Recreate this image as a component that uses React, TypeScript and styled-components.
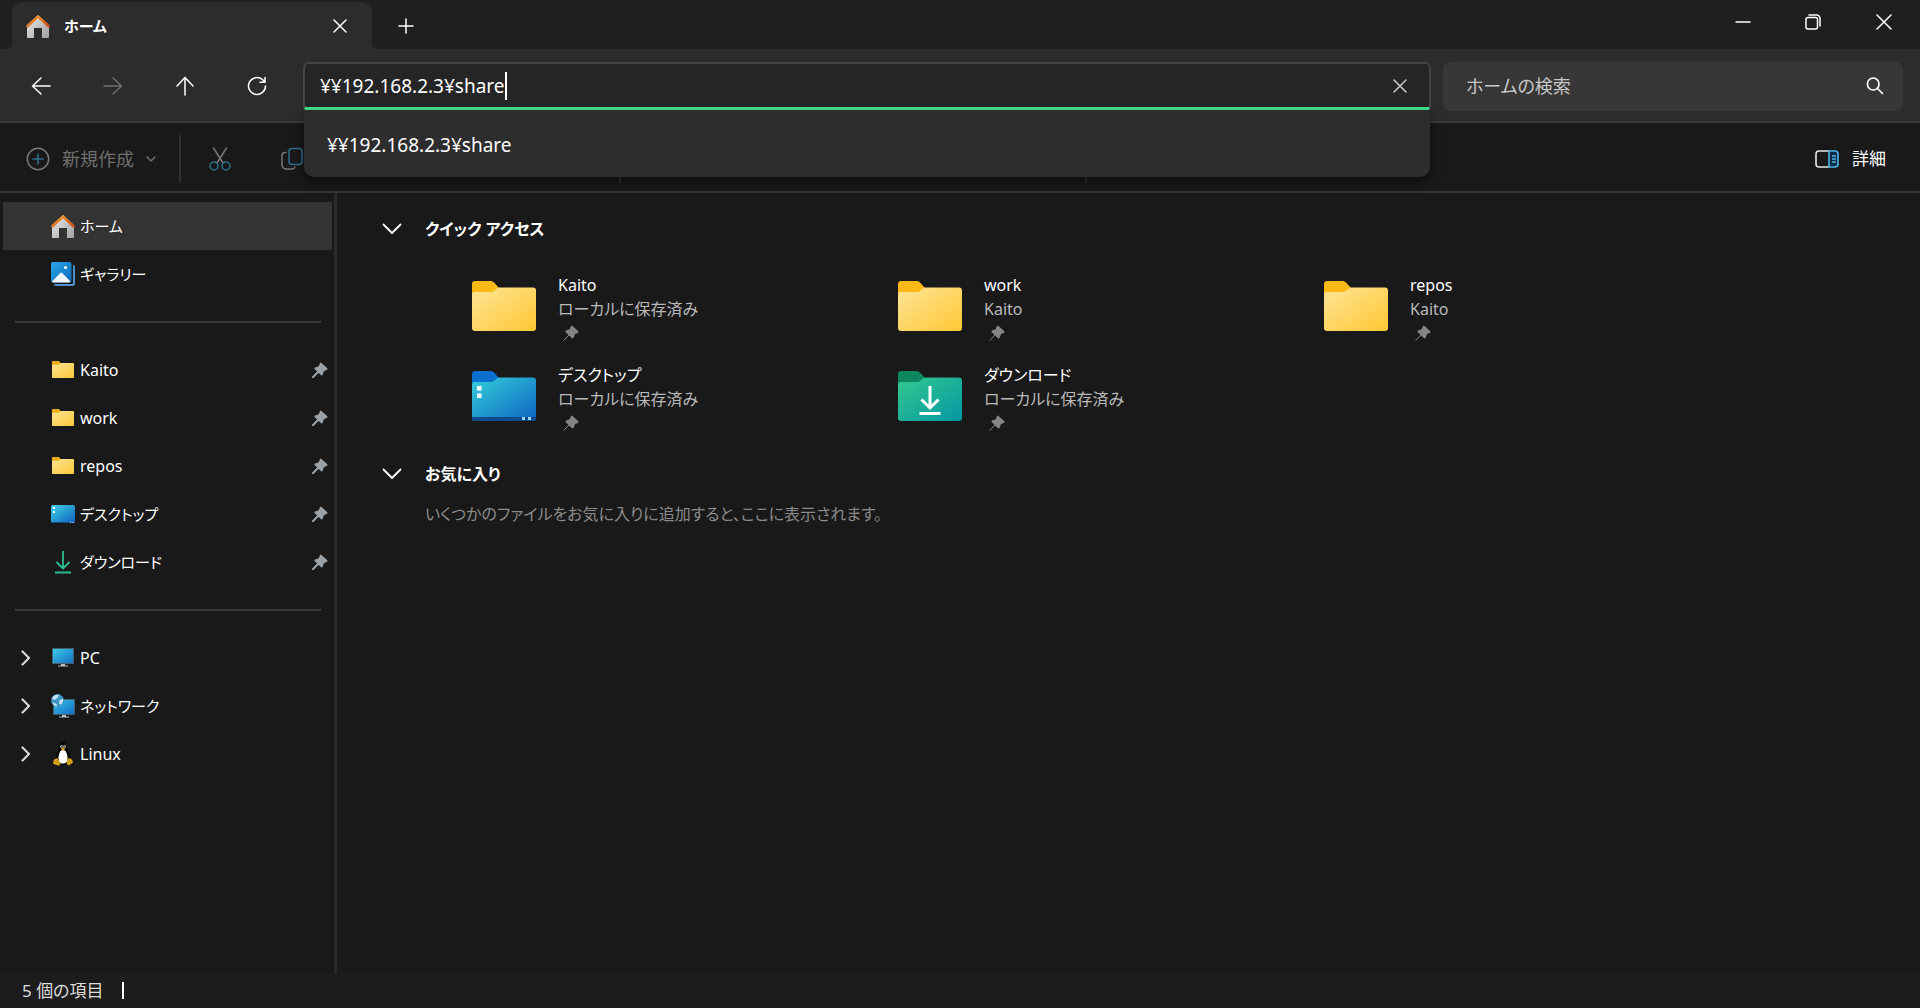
import React, { useState } from "react";
import styled, { createGlobalStyle, css } from "styled-components";

const GlobalStyle = createGlobalStyle`
  *, *::before, *::after { box-sizing: border-box; }
  body {
    margin: 0;
    background: #191919;
    color: #ffffff;
    font-family: "Noto Sans", "Noto Sans CJK JP", sans-serif;
    font-feature-settings: "palt";
    font-size: 16px;
    line-height: 24px;
  }
  button, input {
    font: inherit;
    font-feature-settings: inherit;
    color: inherit;
    background: none;
    border: 0;
    padding: 0;
    margin: 0;
    outline: none;
  }
  svg { display: block; flex: none; }
  h2, p, ul { margin: 0; padding: 0; }
  ul { list-style: none; }
`;

const Window = styled.div`
  display: flex;
  flex-direction: column;
  min-height: 100vh;
`;

const TitleBar = styled.header`
  display: flex;
  align-items: stretch;
  height: 49px;
  padding: 2px 0 0 12px;
  background: #1f1f1f;
`;

const Tab = styled.div`
  position: relative;
  display: flex;
  align-items: center;
  width: 360px;
  padding: 0 16px 0 14px;
  background: #2c2c2c;
  border-radius: 10px 10px 0 0;

  &::before,
  &::after {
    content: "";
    position: absolute;
    bottom: 0;
    width: 6px;
    height: 6px;
  }
  &::before {
    left: -6px;
    background: radial-gradient(circle at 0 0, transparent 6px, #2c2c2c 6px);
  }
  &::after {
    right: -6px;
    background: radial-gradient(circle at 100% 0, transparent 6px, #2c2c2c 6px);
  }
`;

const TabTitle = styled.span`
  flex: 1;
  margin-left: 14px;
  font-size: 15px;
  font-weight: 600;
`;

const IconButton = styled.button<{ $w: number; $h: number; $dim?: boolean }>`
  display: flex;
  align-items: center;
  justify-content: center;
  flex: none;
  width: ${(p) => p.$w}px;
  height: ${(p) => p.$h}px;
  color: ${(p) => (p.$dim ? "#6f6f6f" : "#ffffff")};
`;

const WindowButtons = styled.div`
  display: flex;
  margin-left: auto;
`;

const NavBar = styled.div`
  display: grid;
  grid-template-columns: 298px minmax(0, 1140fr) minmax(0, 460fr);
  align-items: center;
  height: 74px;
  padding: 2px 17px 0 5px;
  background: #2c2c2c;
  border-bottom: 2px solid #3c3c3c;
`;

const NavButtons = styled.div`
  display: flex;
`;

const AddressArea = styled.div`
  position: relative;
  margin-right: 12px;
`;

const AddressBox = styled.label`
  display: flex;
  align-items: center;
  height: 48px;
  padding: 1px 9px 0 15px;
  background: #252525;
  border: 2px solid #454545;
  border-bottom: 3px solid #41e08b;
  border-radius: 6px 6px 4px 4px;
  font-size: 19px;
`;

const AddressInput = styled.input`
  field-sizing: content;
  caret-color: transparent;
  height: 28px;
`;

const Caret = styled.span`
  width: 2px;
  height: 28px;
  margin-right: auto;
  background: #ffffff;
`;

const ClearTone = styled.span`
  color: #cccccc;
`;

const Suggestions = styled.div`
  position: absolute;
  z-index: 2;
  top: 48px;
  left: 1px;
  right: 1px;
  padding: 11px 0 8px;
  background: #2d2d2d;
  border-radius: 0 0 10px 10px;
  box-shadow: 0 6px 12px rgba(0, 0, 0, 0.45);
`;

const Suggestion = styled.button`
  display: block;
  width: 100%;
  height: 48px;
  padding: 0 23px;
  text-align: left;
  font-size: 19px;
`;

const SearchBox = styled.label`
  display: flex;
  align-items: center;
  height: 49px;
  padding: 0 18px 0 23px;
  background: #373737;
  border-radius: 7px;
`;

const SearchInput = styled.input`
  flex: 1;
  min-width: 0;
  font-size: 18px;
  height: 28px;
  &::placeholder {
    color: #c8c8c8;
    opacity: 1;
  }
`;

const CommandBar = styled.div`
  display: flex;
  align-items: center;
  height: 70px;
  padding: 3px 20px 0 26px;
  border-bottom: 2px solid #363636;
`;

const NewButton = styled.button`
  display: flex;
  align-items: center;
  width: 153px;
  height: 48px;
  color: #6f6f6f;
  font-size: 18px;
  gap: 12px;
`;

const Divider = styled.span`
  width: 2px;
  height: 48px;
  background: #303030;
`;

const CommandGroup = styled.div<{ $w: number }>`
  display: flex;
  width: ${(p) => p.$w}px;
  padding: 0 3px;
`;

const DetailsButton = styled.button`
  display: flex;
  align-items: center;
  gap: 13px;
  margin-left: auto;
  padding: 0 14px;
  height: 48px;
  font-size: 17px;
`;

const Body = styled.div`
  display: flex;
  flex: 1;
`;

const Sidebar = styled.nav`
  width: 337px;
  flex: none;
  padding: 9px 2px 0 3px;
  border-right: 3px solid #2a2a2a;
`;

const SideRow = styled.button<{ $active?: boolean }>`
  display: flex;
  align-items: center;
  width: 100%;
  height: 48px;
  padding: 0 4px 0 18px;
  text-align: left;
  ${(p) =>
    p.$active &&
    css`
      background: #333333;
    `}
`;

const Expander = styled.span`
  display: flex;
  width: 30px;
  color: #d6d6d6;
`;

const SideLabel = styled.span<{ $kana?: boolean }>`
  flex: 1;
  margin-left: 5px;
  font-size: ${(p) => (p.$kana ? 15 : 16)}px;
`;

const SidePin = styled.span`
  color: #9aa2a8;
`;

const SideSeparator = styled.hr`
  height: 2px;
  margin: 23px 11px 23px 12px;
  border: 0;
  background: #3b3b3b;
`;

const Main = styled.main`
  flex: 1;
  padding: 12px 45px;
`;

const SectionHead = styled.button`
  display: flex;
  align-items: center;
  gap: 23px;
  height: 48px;
`;

const SectionTitle = styled.h2`
  font-size: 16px;
  line-height: 24px;
  font-weight: 600;
`;

const Tiles = styled.ul`
  display: grid;
  grid-template-columns: repeat(auto-fill, 426px);
  grid-auto-rows: 90px;
  padding: 17px 0 0 90px;
`;

const Tile = styled.li`
  display: flex;
  gap: 22px;
`;

const TileIcon = styled.span`
  padding-top: 11px;
`;

const TileText = styled.div`
  padding-top: 3px;
`;

const TileMeta = styled.div`
  color: #b9b9b9;
`;

const TilePin = styled.div`
  padding: 4px 0 0 5px;
  color: #858585;
`;

const EmptyText = styled.p`
  margin: 4px 0 0 43px;
  color: #8a8a8a;
`;

const StatusBar = styled.footer`
  display: flex;
  align-items: center;
  gap: 18px;
  height: 35px;
  padding: 0 22px;
  background: #1c1c1c;
  color: #dddddd;
  font-size: 17px;
`;

const StatusMark = styled.span`
  width: 2px;
  height: 17px;
  background: #ffffff;
`;

type StrokeProps = { d: string; w: number; h: number; sw?: number };

const Stroke = ({ d, w, h, sw = 1.5 }: StrokeProps) => (
  <svg width={w} height={h} viewBox={`0 0 ${w} ${h}`} fill="none" stroke="currentColor" strokeWidth={sw} strokeLinecap="round" strokeLinejoin="round">
    <path d={d} />
  </svg>
);

const CloseGlyph = ({ size }: { size: number }) => (
  <Stroke w={size} h={size} d={`M1 1L${size - 1} ${size - 1}M${size - 1} 1L1 ${size - 1}`} />
);

const HomeIcon = () => (
  <svg width="24" height="24" viewBox="0 0 24 24">
    <defs>
      <linearGradient id="homeWall" x1="0" y1="0" x2="1" y2="1">
        <stop offset="0" stopColor="#ececec" />
        <stop offset="1" stopColor="#a0a0a0" />
      </linearGradient>
      <linearGradient id="homeRoof" x1="0" y1="0" x2="1" y2="1">
        <stop offset="0" stopColor="#f5a128" />
        <stop offset="1" stopColor="#cf4b12" />
      </linearGradient>
    </defs>
    <path d="M1 11L12 1l11 10v12a1 1 0 0 1-1 1h-6v-10H8v10H2a1 1 0 0 1-1-1z" fill="url(#homeWall)" />
    <path d="M1.4 12.2L12 2.6l10.600 9.600" fill="none" stroke="url(#homeRoof)" strokeWidth="2.600" strokeLinecap="round" strokeLinejoin="round" />
  </svg>
);

const GalleryIcon = () => (
  <svg width="24" height="24" viewBox="0 0 24 24">
    <defs>
      <linearGradient id="gallerySky" x1="0" y1="0" x2="1" y2="1">
        <stop offset="0" stopColor="#2aa6ea" />
        <stop offset="1" stopColor="#0b67b8" />
      </linearGradient>
    </defs>
    <path d="M22 3c1.200 0 2 .8 2 2v17a2 2 0 0 1-2 2H5c-1.200 0-2-.8-2-2h17.500c1 0 1.500-.5 1.500-1.500z" fill="#4f8fce" />
    <rect width="20.500" height="20.500" rx="2" fill="url(#gallerySky)" />
    <path d="M1 19.500l8-8.200a1.600 1.600 0 0 1 2.400 0l8 8.200c-.3.600-.7 1-1.400 1H2.500c-.8 0-1.200-.4-1.500-1z" fill="#f2f8fe" />
    <circle cx="14.500" cy="5.500" r="1.600" fill="#ffffff" />
  </svg>
);

const SmallFolder = () => (
  <svg width="24" height="18" viewBox="0 0 24 18">
    <defs>
      <linearGradient id="smallFolder" x1="0" y1="0" x2="1" y2="1">
        <stop offset="0" stopColor="#ffe394" />
        <stop offset="1" stopColor="#ffca3a" />
      </linearGradient>
    </defs>
    <path d="M1 1a1 1 0 0 1 1-1h6l1.500 2-1.500 3H1z" fill="#efb01e" />
    <path d="M1 4h6.500l2-2H22a1 1 0 0 1 1 1v13a1 1 0 0 1-1 1H2a1 1 0 0 1-1-1z" fill="url(#smallFolder)" />
  </svg>
);

const SmallDesktop = () => (
  <svg width="24" height="18" viewBox="0 0 24 18">
    <defs>
      <linearGradient id="smallDesk" x1="0" y1="0" x2="1" y2="1">
        <stop offset="0" stopColor="#3fd0e8" />
        <stop offset="1" stopColor="#1063bd" />
      </linearGradient>
    </defs>
    <rect width="24" height="18" rx="1.500" fill="url(#smallDesk)" />
    <rect y="17" width="24" height="1" fill="#0b4c8f" />
    <path d="M2 2h2v2H2zM2 6h2v2H2zM19 17h1v1h-1zM21.500 17h1v1h-1z" fill="#ffffff" />
  </svg>
);

const SmallDownload = () => (
  <svg width="24" height="24" viewBox="0 0 24 24" fill="none" stroke="#2bbd93" strokeWidth="1.800">
    <path d="M12 1v17M5.500 12l6.500 6.500 6.500-6.500M4 22.500h16" />
  </svg>
);

const PcIcon = () => (
  <svg width="24" height="24" viewBox="0 0 24 24">
    <defs>
      <linearGradient id="pcScreen" x1="0" y1="0" x2="1" y2="1">
        <stop offset="0" stopColor="#3ccbe8" />
        <stop offset="1" stopColor="#1470c6" />
      </linearGradient>
    </defs>
    <rect x="1" y="2" width="22" height="16" rx="1" fill="#48606c" />
    <rect x="2" y="3" width="20" height="14" fill="url(#pcScreen)" />
    <path d="M10 18h4v1.500h3v1H7v-1h3z" fill="#b7c0c6" />
  </svg>
);

const NetworkIcon = () => (
  <svg width="24" height="24" viewBox="0 0 24 24">
    <defs>
      <linearGradient id="netScreen" x1="0" y1="0" x2="1" y2="1">
        <stop offset="0" stopColor="#35bfe4" />
        <stop offset="1" stopColor="#1470c6" />
      </linearGradient>
    </defs>
    <rect x="2" y="5" width="22" height="16" rx="1" fill="#48606c" />
    <rect x="3" y="6" width="20" height="14" fill="url(#netScreen)" />
    <path d="M11 21h4v1.500h3v1H8v-1h3z" fill="#b7c0c6" />
    <circle cx="6.500" cy="6.500" r="6.500" fill="#3f94c4" />
    <path d="M2 2.500C4 1 6 .6 8 1L6.500 4 3.500 6 1 5zM8.500 6L12 5c.6 2-.2 4-1.800 5.600L8 10zM2.500 8.500L5.500 10l.5 2.600c-2-.3-3.500-1.600-4.500-3.300z" fill="#bfe3f3" />
  </svg>
);

const TuxIcon = () => (
  <svg width="24" height="24" viewBox="0 0 24 24">
    <path d="M12 0c2.700 0 3.600 2 3.600 4.500 0 2.700 1.600 4.200 2.900 7.200 1.300 3 1 5.800-.5 8.300l-3 2.500H9l-3-2.500c-1.500-2.500-1.600-5.500-.3-8.300C7 8.700 8.400 7.200 8.400 4.500 8.400 2 9.300 0 12 0z" fill="#050505" />
    <path d="M12 8c1.800 0 3 1 3.700 3.600 1 3.200 1.400 5.400 0 8.400-2.200 2-5.200 2-7.400 0-1.400-3-1-5.200 0-8.400C9 9 10.200 8 12 8z" fill="#ffffff" />
    <circle cx="10.500" cy="4.500" r="1.300" fill="#d9d9d9" />
    <circle cx="13.500" cy="4.500" r="1.300" fill="#d9d9d9" />
    <circle cx="10.800" cy="4.700" r=".6" fill="#111111" />
    <circle cx="13.200" cy="4.700" r=".6" fill="#111111" />
    <path d="M9.600 6.500L12 5.400l2.500 1.100L12 8.400z" fill="#d9a11c" />
    <path d="M3 17.500l3-1.500 3.200 4.500c.6 1.500-.4 3-2 3l-4.700-1.400c-.6-.3-.4-1.200-.2-2zM21 17.500l-3-1.500c-1.300.5-2 2-2.200 4-.2 2 .8 3.700 2.400 3.300l3.400-2.500c.6-.5.3-1-.1-1.700z" fill="#d4a017" />
  </svg>
);

const Pin = ({ thin }: { thin?: boolean }) => (
  <svg width="16" height="16" viewBox="0 0 16 16" fill="currentColor">
    <path d="M9 .4L15.600 6.400 14.900 8l-2.900 1.100-1.400 3.900-1.300.6-3-2.900L2.300 6.800 3 5.500l3.600-1.300L8 1.100z" />
    <path d="M6 10L.9 15.300" stroke="currentColor" strokeWidth={thin ? 1 : 2} strokeLinecap="round" />
  </svg>
);

type FolderKind = "folder" | "desktop" | "download";
const folderColors: Record<FolderKind, [string, string, string]> = {
  folder: ["#ffe597", "#ffc733", "#fab914"],
  desktop: ["#35cfdc", "#0c63c0", "#0a6fce"],
  download: ["#33c98c", "#0497a6", "#0b8660"],
};

const BigFolder = ({ kind }: { kind: FolderKind }) => {
  const [from, to, back] = folderColors[kind];
  return (
    <svg width="64" height="50" viewBox="0 0 64 50">
      <defs>
        <linearGradient id={`big-${kind}`} x1="0" y1="0" x2="1" y2="1">
          <stop offset="0" stopColor={from} />
          <stop offset="1" stopColor={to} />
        </linearGradient>
      </defs>
      <path d="M0 3a3 3 0 0 1 3-3h15c2 0 3 .6 4.500 2L27 7v6H0z" fill={back} />
      <path d="M0 13.500A2.500 2.500 0 0 1 2.500 11H18c2 0 3.200-.4 4.500-1.500L25 7.400c.8-.6 1.400-.9 2.500-.9H61a3 3 0 0 1 3 3V47a3 3 0 0 1-3 3H3a3 3 0 0 1-3-3z" fill={`url(#big-${kind})`} />
      {kind === "desktop" && (
        <>
          <path d="M0 46h64v1a3 3 0 0 1-3 3H3a3 3 0 0 1-3-3z" fill="#0b4a8c" />
          <path d="M5 15h4.500v4.500H5zM5 22.500h4.500V27H5z" fill="#ffffff" />
          <path d="M50 46h3v3h-3zM56 46h3v3h-3z" fill="#9fd3f5" />
        </>
      )}
      {kind === "download" && (
        <path d="M32 15v21M23.500 28.500L32 37l8.500-8.500M21.500 42.500h21" fill="none" stroke="#ffffff" strokeWidth="3" />
      )}
    </svg>
  );
};

const NewIcon = () => (
  <svg width="24" height="24" viewBox="0 0 24 24" fill="none" strokeWidth="1.500">
    <circle cx="12" cy="12" r="10.700" stroke="#777777" />
    <path d="M12 7v10M7 12h10" stroke="#2f6f90" strokeLinecap="round" />
  </svg>
);

const CutIcon = () => (
  <svg width="24" height="24" viewBox="0 0 24 24" fill="none" strokeWidth="1.500">
    <path d="M5.500 1L15 16M18.500 1L9 16" stroke="#777777" strokeLinecap="round" />
    <circle cx="6" cy="19" r="4" stroke="#2f6f90" />
    <circle cx="18" cy="19" r="4" stroke="#2f6f90" />
  </svg>
);

const CopyIcon = () => (
  <svg width="22" height="24" viewBox="0 0 22 24" fill="none" strokeWidth="1.500">
    <path d="M5.500 5.500H4A3 3 0 0 0 1 8.500v9A4.500 4.500 0 0 0 5.500 22H11a3 3 0 0 0 3-2.500" stroke="#777777" />
    <rect x="8" y="1.500" width="13" height="16" rx="3" stroke="#2f6f90" />
  </svg>
);

const DetailsIcon = () => (
  <svg width="24" height="18" viewBox="0 0 24 18" fill="none" strokeWidth="1.600">
    <path d="M14 1H4a3 3 0 0 0-3 3v10a3 3 0 0 0 3 3h10" stroke="#e6e6e6" />
    <path d="M14 1h6a3 3 0 0 1 3 3v10a3 3 0 0 1-3 3h-6z" fill="#0d2f45" stroke="#4fb4e8" />
    <path d="M17 6h4M17 9h4M17 12h4" stroke="#4fb4e8" />
  </svg>
);

const RestoreIcon = () => (
  <svg width="16" height="16" viewBox="0 0 16 16" fill="none" stroke="currentColor" strokeWidth="1.500">
    <rect x="1" y="3.500" width="11.500" height="11.500" rx="2" />
    <path d="M4 1h7.500A3.500 3.500 0 0 1 15 4.500V12" strokeLinecap="round" />
  </svg>
);

const RefreshIcon = () => <Stroke w={20} h={20} d="M18.500 10A8.500 8.500 0 1 1 15.500 3.500L17.800 6M18 1.500V6.200H13" />;
const ChevronDown = () => <Stroke w={20} h={12} sw={1.800} d="M1.500 1.500L10 10L18.500 1.500" />;
const ChevronRight = () => <Stroke w={10} h={16} sw={2.200} d="M1.500 1.500L8 8L1.500 14.500" />;

const pinnedItems = [
  { label: "Kaito", icon: <SmallFolder /> },
  { label: "work", icon: <SmallFolder /> },
  { label: "repos", icon: <SmallFolder /> },
  { label: "デスクトップ", kana: true, icon: <SmallDesktop /> },
  { label: "ダウンロード", kana: true, icon: <SmallDownload /> },
];

const deviceItems = [
  { label: "PC", icon: <PcIcon /> },
  { label: "ネットワーク", kana: true, icon: <NetworkIcon /> },
  { label: "Linux", icon: <TuxIcon /> },
];

const quickAccess: { name: string; meta: string; kind: FolderKind }[] = [
  { name: "Kaito", meta: "ローカルに保存済み", kind: "folder" },
  { name: "work", meta: "Kaito", kind: "folder" },
  { name: "repos", meta: "Kaito", kind: "folder" },
  { name: "デスクトップ", meta: "ローカルに保存済み", kind: "desktop" },
  { name: "ダウンロード", meta: "ローカルに保存済み", kind: "download" },
];

export default function App() {
  const [address, setAddress] = useState("¥¥192.168.2.3¥share");
  const [query, setQuery] = useState("");

  return (
    <>
      <GlobalStyle />
      <Window>
        <TitleBar>
          <Tab>
            <HomeIcon />
            <TabTitle>ホーム</TabTitle>
            <IconButton $w={32} $h={32} aria-label="タブを閉じる"><CloseGlyph size={14} /></IconButton>
          </Tab>
          <IconButton $w={68} $h={47} aria-label="新しいタブ"><Stroke w={16} h={16} d="M8 1V15M1 8H15" /></IconButton>
          <WindowButtons>
            <IconButton $w={70} $h={39} aria-label="最小化"><Stroke w={16} h={16} d="M1 8H15" /></IconButton>
            <IconButton $w={70} $h={39} aria-label="元に戻す"><RestoreIcon /></IconButton>
            <IconButton $w={72} $h={39} aria-label="閉じる"><CloseGlyph size={16} /></IconButton>
          </WindowButtons>
        </TitleBar>

        <NavBar>
          <NavButtons>
            <IconButton $w={72} $h={48} aria-label="戻る"><Stroke w={20} h={18} d="M10 1L1.500 9L10 17M1.500 9H19" /></IconButton>
            <IconButton $w={72} $h={48} $dim aria-label="進む"><Stroke w={20} h={18} d="M10 1L18.500 9L10 17M18.500 9H1" /></IconButton>
            <IconButton $w={72} $h={48} aria-label="上へ"><Stroke w={18} h={20} d="M1 10L9 1.500L17 10M9 1.500V19" /></IconButton>
            <IconButton $w={72} $h={48} aria-label="最新の情報に更新"><RefreshIcon /></IconButton>
          </NavButtons>
          <AddressArea>
            <AddressBox>
              <AddressInput aria-label="アドレス" value={address} onChange={(e) => setAddress(e.target.value)} />
              <Caret />
              <IconButton $w={40} $h={40} aria-label="クリア" onClick={() => setAddress("")}>
                <ClearTone><CloseGlyph size={14} /></ClearTone>
              </IconButton>
            </AddressBox>
            <Suggestions>
              <Suggestion>¥¥192.168.2.3¥share</Suggestion>
            </Suggestions>
          </AddressArea>
          <SearchBox>
            <SearchInput aria-label="ホームの検索" placeholder="ホームの検索" value={query} onChange={(e) => setQuery(e.target.value)} />
            <Stroke w={20} h={20} sw={1.700} d="M14 8A5.800 6 0 1 1 2.400 8A5.800 6 0 1 1 14 8M12.500 12.500L17.500 17.500" />
          </SearchBox>
        </NavBar>

        <CommandBar>
          <NewButton>
            <NewIcon />
            <span>新規作成</span>
            <Stroke w={10} h={6} d="M1 1L5 5L9 1" />
          </NewButton>
          <Divider />
          <CommandGroup $w={438}>
            <IconButton $w={72} $h={48} aria-label="切り取り"><CutIcon /></IconButton>
            <IconButton $w={72} $h={48} aria-label="コピー"><CopyIcon /></IconButton>
          </CommandGroup>
          <Divider />
          <CommandGroup $w={464} />
          <Divider />
          <DetailsButton>
            <DetailsIcon />
            詳細
          </DetailsButton>
        </CommandBar>

        <Body>
          <Sidebar>
            <SideRow $active>
              <Expander />
              <HomeIcon />
              <SideLabel $kana>ホーム</SideLabel>
            </SideRow>
            <SideRow>
              <Expander />
              <GalleryIcon />
              <SideLabel $kana>ギャラリー</SideLabel>
            </SideRow>
            <SideSeparator />
            {pinnedItems.map((item) => (
              <SideRow key={item.label}>
                <Expander />
                {item.icon}
                <SideLabel $kana={item.kana}>{item.label}</SideLabel>
                <SidePin><Pin /></SidePin>
              </SideRow>
            ))}
            <SideSeparator />
            {deviceItems.map((item) => (
              <SideRow key={item.label}>
                <Expander><ChevronRight /></Expander>
                {item.icon}
                <SideLabel $kana={item.kana}>{item.label}</SideLabel>
              </SideRow>
            ))}
          </Sidebar>

          <Main>
            <SectionHead>
              <ChevronDown />
              <SectionTitle>クイック アクセス</SectionTitle>
            </SectionHead>
            <Tiles>
              {quickAccess.map((item) => (
                <Tile key={item.name}>
                  <TileIcon><BigFolder kind={item.kind} /></TileIcon>
                  <TileText>
                    <div>{item.name}</div>
                    <TileMeta>{item.meta}</TileMeta>
                    <TilePin><Pin thin /></TilePin>
                  </TileText>
                </Tile>
              ))}
            </Tiles>
            <SectionHead>
              <ChevronDown />
              <SectionTitle>お気に入り</SectionTitle>
            </SectionHead>
            <EmptyText>いくつかのファイルをお気に入りに追加すると、ここに表示されます。</EmptyText>
          </Main>
        </Body>

        <StatusBar>
          <span>5 個の項目</span>
          <StatusMark />
        </StatusBar>
      </Window>
    </>
  );
}
